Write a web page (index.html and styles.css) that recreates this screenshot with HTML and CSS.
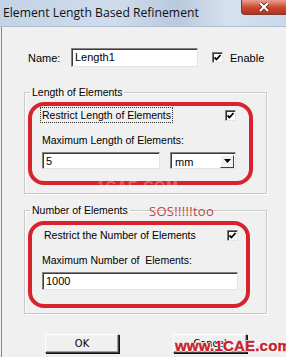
FILE: index.html
```html
<!DOCTYPE html>
<html lang="en">
<head>
    <meta charset="UTF-8">
    <title>Element Length Based Refinement</title>
    <link rel="stylesheet" href="styles.css">
</head>
<body>
    <div class="window">
        <div class="titlebar">
            <span class="title">Element Length Based Refinement</span>
            <span class="close"><svg viewBox="0 0 12 10" width="12" height="10"><path d="M2 1 L10 9 M10 1 L2 9" stroke="#5a1a12" stroke-width="3.4"/><path d="M2 1 L10 9 M10 1 L2 9" stroke="#fff" stroke-width="2.2"/></svg></span>
        </div>
        <div class="content">
            <div class="name-row">
                <span class="name-label">Name:</span>
                <div class="textbox name-box">Length1</div>
                <span class="check"><svg viewBox="0 0 9 9" width="9" height="9"><path d="M1.5 4.5 L3.5 6.5 L7.5 2" fill="none" stroke="#000" stroke-width="1.8"/></svg></span>
                <span class="enable">Enable</span>
            </div>

            <fieldset class="group group-length">
                <legend>Length of Elements</legend>
                <div class="mark mark-length">
                    <div class="row">
                        <span class="focus">Restrict Length of Elements</span>
                        <span class="check"><svg viewBox="0 0 9 9" width="9" height="9"><path d="M1.5 4.5 L3.5 6.5 L7.5 2" fill="none" stroke="#000" stroke-width="1.8"/></svg></span>
                    </div>
                    <div class="label">Maximum Length of Elements:</div>
                    <div class="input-row">
                        <div class="textbox len-box">5</div>
                        <div class="combo">
                            <span>mm</span>
                            <span class="arrow"><svg viewBox="0 0 7 4" width="7" height="4"><path d="M0 0 H7 L3.5 4 Z" fill="#000"/></svg></span>
                        </div>
                    </div>
                </div>
                <div class="faint">1CAE.COM</div>
            </fieldset>

            <fieldset class="group group-number">
                <legend>Number of Elements</legend>
                <span class="sos">SOS!!!!!too</span>
                <div class="mark mark-number">
                    <div class="row">
                        <span class="plain">Restrict the Number of Elements</span>
                        <span class="check"><svg viewBox="0 0 9 9" width="9" height="9"><path d="M1.5 4.5 L3.5 6.5 L7.5 2" fill="none" stroke="#000" stroke-width="1.8"/></svg></span>
                    </div>
                    <div class="label">Maximum Number of &nbsp;Elements:</div>
                    <div class="textbox num-box">1000</div>
                </div>
            </fieldset>

            <div class="buttons">
                <button type="button" class="btn">OK</button>
                <button type="button" class="btn">Cancel</button>
            </div>
            <div class="stamp">www.1CAE.com</div>
        </div>
    </div>
</body>
</html>
```

FILE: styles.css
```css
body {
    margin: 0;
    width: 286px;
    height: 357px;
    overflow: hidden;
    background: #f0f0f0;
    font-family: "Liberation Sans", Arial, sans-serif;
    font-size: 10.5px;
    color: #000;
}
.window {
    position: relative;
    height: 357px;
}
.titlebar {
    height: 27px;
    display: flex;
    align-items: flex-start;
    background: linear-gradient(90deg, #c3d3e6 0%, #cfdcec 40%, #b9c9de 62%, #d5e1ef 80%, #c9d7e8 100%);
    border-bottom: 1px solid #aebdd0;
    box-sizing: border-box;
}
.title {
    font-family: "Open Sans", "Noto Sans", sans-serif;
    font-size: 12.2px;
    color: #111;
    padding: 4px 0 0 3px;
}
.close {
    margin-left: auto;
    width: 44px;
    height: 14px;
    background: linear-gradient(#e8a08e, #c9462e 55%, #b6321c);
    border: 1px solid #7a3b30;
    border-top: none;
    border-right: none;
    border-radius: 0 0 0 4px;
    display: flex;
    align-items: center;
    justify-content: center;
}
.content {
    border-left: 1px solid #7d8a99;
    margin-left: 1px;
    height: 330px;
    box-sizing: border-box;
}
.name-row {
    display: flex;
    align-items: center;
    padding: 21px 0 0 26px;
    height: 19px;
}
.name-label {
    width: 43px;
    font-size: 11px;
}
.textbox {
    box-sizing: border-box;
    height: 19px;
    background: #fff;
    border: 1px solid;
    border-color: #828282 #e3e3e3 #e3e3e3 #828282;
    box-shadow: inset 1px 1px 0 #3c3c3c;
    padding: 2px 0 0 3px;
    font-size: 11px;
}
.name-box {
    width: 127px;
}
.check {
    box-sizing: border-box;
    width: 11px;
    height: 11px;
    background: #fff;
    border: 1px solid;
    border-color: #7a7a7a #e3e3e3 #e3e3e3 #7a7a7a;
    box-shadow: inset 1px 1px 0 #333;
    display: flex;
    align-items: center;
    justify-content: center;
}
.name-row .check {
    margin-left: 14px;
}
.enable {
    margin-left: 7px;
    font-size: 11px;
}
.group {
    position: relative;
    margin: 19px 0 0 22px;
    width: 243px;
    padding: 0;
    border: 1px solid #c9c9c9;
    box-shadow: inset 1px 1px 0 #fff, 1px 1px 0 #fff;
    box-sizing: border-box;
}
.group legend {
    margin-left: 5px;
    padding: 0 2px;
    font-size: 10.5px;
}
.group-length {
    height: 108px;
}
.group-number {
    margin-top: 10px;
    height: 110px;
}
.mark {
    border: 4px solid #d7232d;
    border-radius: 16px;
    margin-left: 3px;
    box-sizing: border-box;
}
.mark-length {
    width: 225px;
    height: 83px;
    margin-top: 4px;
    padding: 1px 13px 0 10px;
}
.mark-number {
    width: 222px;
    height: 87px;
    margin-top: 5px;
    padding: 2px 8px 0 10px;
}
.row {
    display: flex;
    justify-content: space-between;
    align-items: center;
    height: 16px;
}
.focus {
    outline: 1px dotted #333;
    padding: 1px 1px;
    margin-left: -1px;
}
.plain {
    margin-left: 2px;
}
.label {
    margin-top: 11px;
    height: 14px;
}
.input-row {
    display: flex;
    margin-top: 4px;
    gap: 10px;
}
.len-box {
    width: 118px;
    height: 17px;
}
.combo {
    box-sizing: border-box;
    width: 66px;
    height: 17px;
    background: #fff;
    border: 1px solid;
    border-color: #828282 #e3e3e3 #e3e3e3 #828282;
    box-shadow: inset 1px 1px 0 #3c3c3c;
    display: flex;
    align-items: center;
    justify-content: space-between;
    padding: 1px 1px 0 4px;
    font-size: 11px;
}
.combo span:first-child {
    padding-top: 2px;
}
.arrow {
    width: 14px;
    height: 13px;
    background: #f0f0f0;
    border: 1px solid;
    border-color: #fff #404040 #404040 #fff;
    box-sizing: border-box;
    display: flex;
    align-items: center;
    justify-content: center;
}
.num-box {
    width: 196px;
    height: 18px;
    margin-top: 4px;
}
.faint {
    position: absolute;
    left: 72px;
    top: 80px;
    font-size: 14px;
    font-weight: bold;
    color: rgba(255, 255, 255, 0.3);
    letter-spacing: 1px;
}
.sos {
    position: absolute;
    left: 124px;
    top: -14px;
    color: #c8424a;
    font-family: "Open Sans", sans-serif;
    font-size: 13px;
    letter-spacing: 0.3px;
}
.buttons {
    display: flex;
    gap: 54px;
    margin: 20px 0 0 43px;
}
.btn {
    width: 74px;
    height: 19px;
    background: #f0f0f0;
    border: 1px solid;
    border-color: #fff #404040 #404040 #fff;
    box-shadow: inset -1px -1px 0 #a0a0a0, 1px 1px 0 #111;
    font-family: "DejaVu Sans Condensed", "Liberation Sans", sans-serif;
    font-size: 11px;
    padding: 0;
    color: #000;
}
.stamp {
    position: absolute;
    left: 175px;
    top: 337px;
    font-family: "Liberation Sans", Arial, sans-serif;
    font-weight: bold;
    font-size: 15px;
    line-height: 17px;
    color: #c5232c;
    -webkit-text-stroke: 0.4px #c5232c;
    text-shadow: 1px 0 0 #fff, -1px 0 0 #fff, 0 1px 0 #fff, 0 -1px 0 #fff;
    letter-spacing: 0.2px;
}
```
